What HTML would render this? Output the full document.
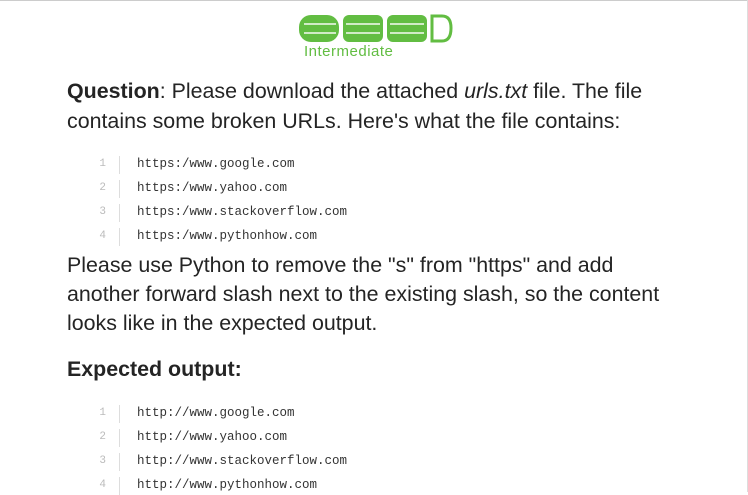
<!DOCTYPE html>
<html><head><style>
body{margin:0;width:748px;height:492px;overflow:hidden;background:#fff;font-family:"Liberation Sans",sans-serif;color:#242424;position:relative}
.top{position:absolute;left:0;top:0;width:748px;height:1px;background:#ccc}
.right{position:absolute;right:0;top:0;width:1px;height:492px;background:#ddd}
.t{position:absolute;left:67px;font-size:21.4px;white-space:nowrap}
.c{position:absolute;font-family:"Liberation Mono",monospace;font-size:12.5px;color:#333}
.n{position:absolute;left:92px;width:14px;text-align:right;font-family:"Liberation Mono",monospace;font-size:11px;color:#bbb}
.bar{position:absolute;left:119px;width:1px;height:18px;background:#ddd}
</style></head><body>
<div class="top"></div><div class="right"></div>
<svg style="position:absolute;left:296px;top:12px" width="160" height="48">
<g fill="#62bd42">
<rect x="3" y="3" width="40" height="27" rx="12"/>
<rect x="47" y="3" width="40" height="27" rx="6"/>
<rect x="91" y="3" width="40" height="27" rx="6"/>
</g>
<g stroke="#fff" stroke-width="2" opacity=".7"><line x1="8" y1="12" x2="40" y2="12"/><line x1="8" y1="21" x2="40" y2="21"/><line x1="50" y1="12" x2="84" y2="12"/><line x1="50" y1="21" x2="84" y2="21"/><line x1="94" y1="12" x2="128" y2="12"/><line x1="94" y1="21" x2="128" y2="21"/></g>
<path d="M136 4 L146 4 Q155 4 155 16 Q155 29 146 29 L136 29 Z" fill="none" stroke="#62bd42" stroke-width="3"/>
<text x="8" y="44" font-family="Liberation Sans" font-size="15" fill="#62bd42" letter-spacing="0.5">Intermediate</text>
</svg>
<div class="t" style="top:79px"><b>Question</b>: Please download the attached <i>urls.txt</i> file. The file</div>
<div class="t" style="top:109px">contains some broken URLs. Here's what the file contains:</div>
<div class="n" style="top:158px">1</div><div class="bar" style="top:156px"></div><div class="c" style="left:137px;top:157px">https:/www.google.com</div>
<div class="n" style="top:182px">2</div><div class="bar" style="top:180px"></div><div class="c" style="left:137px;top:181px">https:/www.yahoo.com</div>
<div class="n" style="top:206px">3</div><div class="bar" style="top:204px"></div><div class="c" style="left:137px;top:205px">https:/www.stackoverflow.com</div>
<div class="n" style="top:230px">4</div><div class="bar" style="top:228px"></div><div class="c" style="left:137px;top:229px">https:/www.pythonhow.com</div>
<div class="t" style="top:253px">Please use Python to remove the "s" from "https" and add</div>
<div class="t" style="top:282px">another forward slash next to the existing slash, so the content</div>
<div class="t" style="top:311px">looks like in the expected output.</div>
<div class="t" style="top:357px"><b>Expected output:</b></div>
<div class="n" style="top:407px">1</div><div class="bar" style="top:405px"></div><div class="c" style="left:137px;top:406px">http://www.google.com</div>
<div class="n" style="top:431px">2</div><div class="bar" style="top:429px"></div><div class="c" style="left:137px;top:430px">http://www.yahoo.com</div>
<div class="n" style="top:455px">3</div><div class="bar" style="top:453px"></div><div class="c" style="left:137px;top:454px">http://www.stackoverflow.com</div>
<div class="n" style="top:479px">4</div><div class="bar" style="top:477px"></div><div class="c" style="left:137px;top:478px">http://www.pythonhow.com</div>
</body></html>
